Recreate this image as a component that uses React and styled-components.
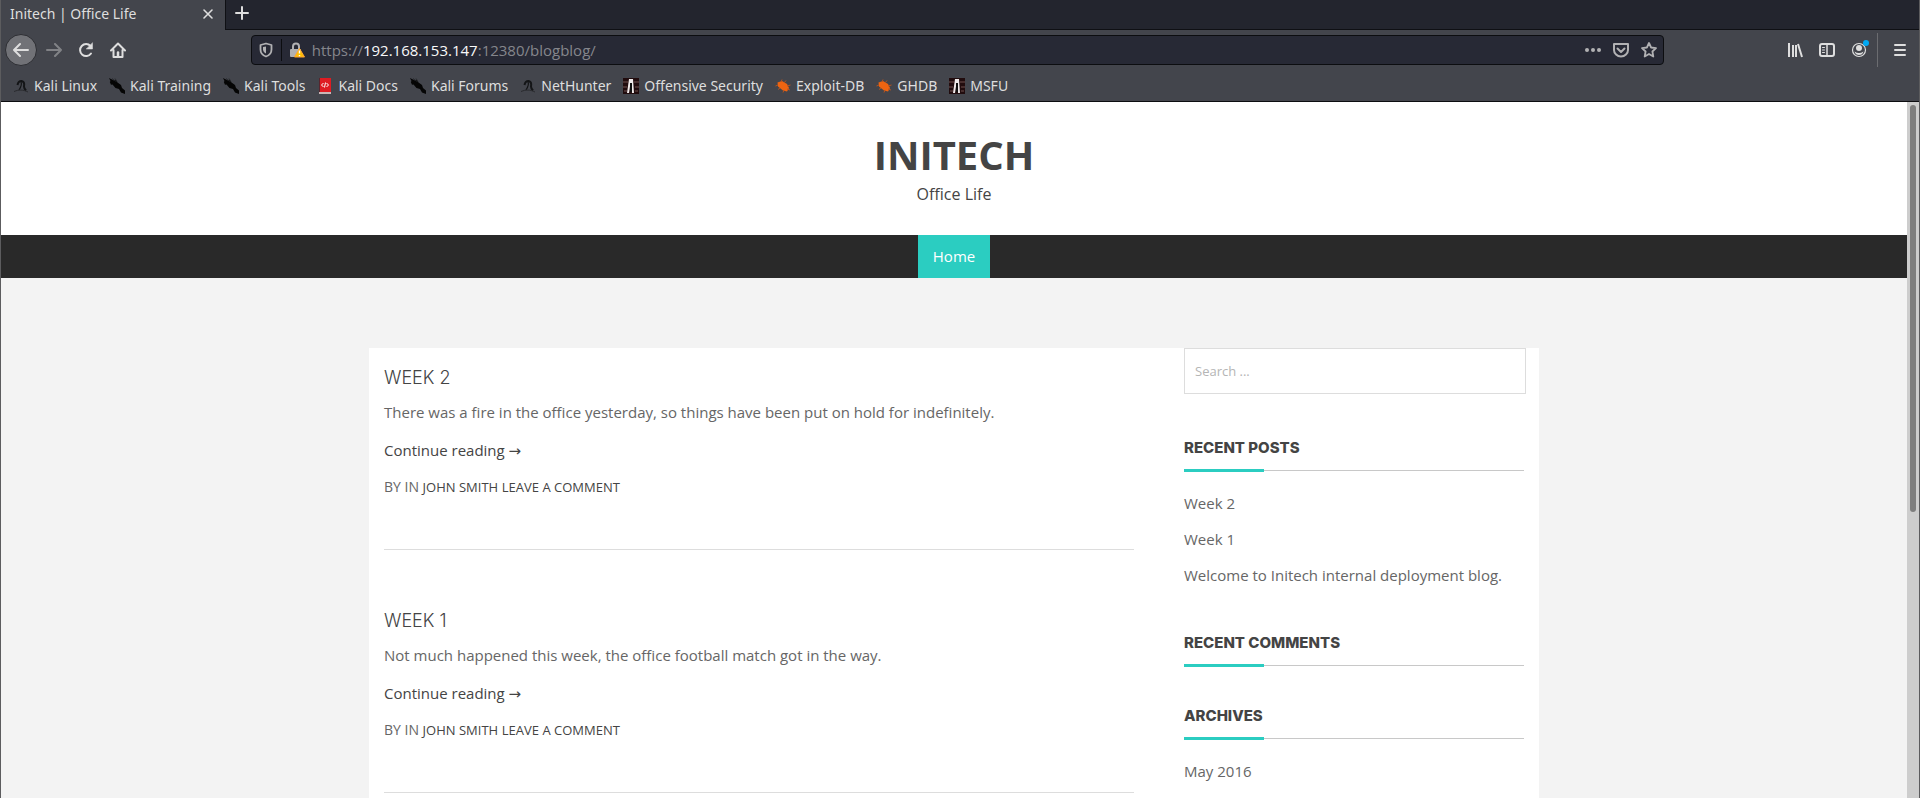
import React from "react";
import styled, { createGlobalStyle } from "styled-components";

const GlobalStyle = createGlobalStyle`
  *, *::before, *::after { box-sizing: border-box; }
  body { margin: 0; background: #f3f3f3; }
  h1, h2, h3, p, ul { margin: 0; padding: 0; }
  a { color: inherit; text-decoration: none; }
  button { padding: 0; border: 0; background: none; color: inherit; font: inherit; }
  svg { display: block; flex: none; }
`;

const Window = styled.div`
  display: flex;
  flex-direction: column;
  height: 100vh;
  overflow: hidden;
  border: solid #5c5c5e;
  border-width: 0 1px;
`;

const Chrome = styled.header`
  flex: none;
  background: #43454c;
  color: #dedede;
  font: 14px/20px "Noto Sans", sans-serif;
  border-bottom: 1px solid #0c0d10;
`;

const TabStrip = styled.div`
  display: flex;
  height: 30px;
  background: #23252e;
`;

const Tab = styled.div`
  display: flex;
  align-items: center;
  justify-content: space-between;
  width: 224px;
  padding: 0 11px 3px 9px;
  background: #43454c;
`;

const NewTab = styled.button`
  display: flex;
  flex: 1;
  align-items: center;
  padding: 0 8px 3px;
  border-left: 1px solid #0f1014;
  border-bottom: 1px solid #0f1014;
`;

const Toolbar = styled.div`
  display: flex;
  align-items: center;
  height: 40px;
  padding: 0 9px 0 4px;
`;

const NavButton = styled.button`
  display: grid;
  place-items: center;
  width: 32px;
  height: 32px;
  opacity: ${(p) => (p.disabled ? 0.4 : 1)};
`;

const BackButton = styled(NavButton)`
  margin-right: 1px;
  border: 1px solid #2d2e33;
  border-radius: 50%;
  background: #717277;
`;

const Spacer = styled.div`
  flex: 1;
  max-width: 117px;
`;

const UrlBar = styled.div`
  display: flex;
  flex: 12;
  align-items: center;
  gap: 7px;
  height: 30px;
  padding: 0 4px 0 6px;
  border: 1px solid #0c0d10;
  border-radius: 4px;
  background: #272935;
  color: #b1b1b3;
`;

const UrlDivider = styled.span`
  width: 1px;
  height: 22px;
  background: #0c0d10;
`;

const Url = styled.div`
  flex: 1;
  color: #85868c;
  font: 15px/20px "Open Sans", sans-serif;
  white-space: nowrap;
`;

const Host = styled.span`
  color: #f9f9fa;
`;

const IconButton = styled.button`
  display: grid;
  place-items: center;
  width: ${(p) => p.$width || 20}px;
  height: 28px;
`;

const Tools = styled.div`
  display: flex;
  align-items: center;
  gap: 12px;
  padding-left: 4px;
`;

const ToolDivider = styled.span`
  width: 1px;
  height: 34px;
  margin-left: -4px;
  background: #6b6c70;
`;

const Bookmarks = styled.nav`
  display: flex;
  align-items: center;
  gap: 12px;
  height: 31px;
  padding: 0 12px;
`;

const Bookmark = styled.a`
  display: flex;
  align-items: center;
  gap: 5px;
  white-space: nowrap;
`;

const Viewport = styled.div`
  display: flex;
  flex: 1;
  min-height: 0;
`;

const Page = styled.div`
  flex: 1;
  overflow: hidden;
  background: #f3f3f3;
  color: #666;
  font: 15px/22px "Open Sans", "DejaVu Sans", sans-serif;
`;

const ScrollTrack = styled.div`
  width: 12px;
  padding: 3px;
  background: #cdcdcd;
`;

const ScrollThumb = styled.div`
  height: 59%;
  border-radius: 3px;
  background: #7e7e7e;
`;

const Masthead = styled.header`
  padding: 26px 0 29px;
  background: #fff;
  color: #444;
  text-align: center;
`;

const SiteTitle = styled.h1`
  font-size: 40px;
  line-height: 54px;
`;

const Tagline = styled.p`
  font-size: 16px;
  line-height: 24px;
`;

const SiteNav = styled.nav`
  display: flex;
  justify-content: center;
  background: #292929;
`;

const NavLink = styled.a`
  padding: 0 15px;
  background: #2bcdc1;
  color: #fff;
  line-height: 43px;
`;

const Container = styled.div`
  display: grid;
  grid-template-columns: 2fr 1fr;
  max-width: 1170px;
  margin: 70px auto 0;
  background: #fff;
`;

const Posts = styled.main`
  padding: 18px 15px 0;
`;

const Post = styled.article`
  margin-bottom: 59px;
  padding-bottom: 51px;
  border-bottom: 1px solid #ddd;
`;

const PostTitle = styled.h2`
  margin-bottom: 11px;
  color: #444;
  font: 300 18px/24px Inter, sans-serif;
`;

const More = styled.p`
  margin: 16px 0 15px;
  color: #444;
`;

const Meta = styled.p`
  font-size: 14px;
  text-transform: uppercase;
`;

const MetaLink = styled.a`
  color: #444;
  font-size: 13px;
`;

const Sidebar = styled.aside`
  padding: 0 15px 0 35px;
`;

const SearchField = styled.input`
  display: block;
  width: calc(100% + 2px);
  height: 46px;
  margin-bottom: 44px;
  padding: 0 10px;
  border: 1px solid #ddd;
  border-radius: 0;
  background: #fff;
  font: 13px/18px "Open Sans", sans-serif;
  &::placeholder { color: #b5b5b5; }
`;

const WidgetBox = styled.section`
  margin-bottom: 40px;
`;

const WidgetTitle = styled.h3`
  position: relative;
  padding-bottom: 12px;
  border-bottom: 1px solid #c8c8c8;
  color: #444;
  font: 800 15px/20px Inter, sans-serif;
  &::after {
    content: "";
    position: absolute;
    left: 0;
    bottom: -2px;
    width: 80px;
    height: 3px;
    background: #2bcdc1;
  }
`;

const WidgetList = styled.ul`
  padding-top: 14px;
  line-height: 36px;
  list-style: none;
`;

const Line = ({ size = 16, width = 2, children, box = 16 }) => (
  <svg width={size} height={size} viewBox={`0 0 ${box} ${box}`} fill="none" stroke="currentColor"
    strokeWidth={width} strokeLinecap="round" strokeLinejoin="round" aria-hidden="true">
    {children}
  </svg>
);

const favicons = {
  dragon: (
    <svg width="16" height="16" viewBox="0 0 16 16" fill="none" stroke="#141517" aria-hidden="true">
      <path d="M4.500 7C5 4 7 3 8.500 3c2.500.5 3 3 2.500 5.500 0 2 1 3 2 4" strokeWidth="2" />
      <path d="M8 4c1 2 0 5-2 8" strokeWidth="1.200" />
      <path d="M1 13.500c5-2 9-2 14 .5" stroke="#292a2e" />
    </svg>
  ),
  kali: (
    <svg width="16" height="16" viewBox="0 0 16 16" aria-hidden="true">
      <path d="M0 0l5 2.500L6.500 2l2 2.500L12 7l1 3 3 2.500V16l-4-1.500-2-3.500-3.500-1L3.500 6.500 2 6.800.8 4 1.500 3z" fill="#050505" />
      <path d="M3 .5l4 3M6 .5l2 3" stroke="#222327" strokeWidth="0.800" />
    </svg>
  ),
  docs: (
    <svg width="16" height="16" viewBox="0 0 16 16" fill="none" aria-hidden="true">
      <path d="M2 0h12v14H2z" fill="#df1c22" />
      <path d="M2 0h1v14H2z" fill="#57252e" />
      <path d="M2 14h12v2H2z" fill="#c8b6b5" />
      <path d="M6.500 5L4.500 7l2 2M9.500 5l2 2-2 2M8.500 4.500l-1 5" stroke="#fff" />
    </svg>
  ),
  offsec: (
    <svg width="16" height="16" viewBox="0 0 16 16" aria-hidden="true">
      <path d="M0 0h16v16H0z" fill="#210c0e" />
      <path d="M0 4h5M11 4h5M0 9h4M12 9h4M1 13h3M12 13h3" stroke="#70504f" />
      <path d="M6 1h4l1 14H9L8.500 5h-1L6 15H4z" fill="#f0eaea" />
      <path d="M7 5h2v9H7z" fill="#101010" />
    </svg>
  ),
  exploit: (
    <svg width="16" height="16" viewBox="0 0 16 16" aria-hidden="true">
      <path d="M2.500 4.500L7 3l5 3 2 4-2 3.500-4-1-5-4z" fill="#ee6411" />
      <path d="M6 4l1-2.500M9 5l2-2.500M12 8l3.500-1M12 11l3 1M3 7L.5 8M5 10l-2 1.500M9 12l-1 2.500" stroke="#b6541f" />
    </svg>
  ),
};

const bookmarks = [
  ["Kali Linux", "dragon"],
  ["Kali Training", "kali"],
  ["Kali Tools", "kali"],
  ["Kali Docs", "docs"],
  ["Kali Forums", "kali"],
  ["NetHunter", "dragon"],
  ["Offensive Security", "offsec"],
  ["Exploit-DB", "exploit"],
  ["GHDB", "exploit"],
  ["MSFU", "offsec"],
];

const posts = [
  ["Week 2", "There was a fire in the office yesterday, so things have been put on hold for indefinitely."],
  ["Week 1", "Not much happened this week, the office football match got in the way."],
];

const widgets = [
  ["Recent Posts", ["Week 2", "Week 1", "Welcome to Initech internal deployment blog."]],
  ["Recent Comments", []],
  ["Archives", ["May 2016"]],
];

function BrowserChrome() {
  return (
    <Chrome>
      <TabStrip>
        <Tab>
          Initech | Office Life
          <IconButton aria-label="Close tab" $width={12}>
            <Line size={12} box={12} width={1.6}><path d="M2 2l8 8M10 2l-8 8" /></Line>
          </IconButton>
        </Tab>
        <NewTab aria-label="New tab"><Line><path d="M8 2v12M2 8h12" /></Line></NewTab>
      </TabStrip>
      <Toolbar>
        <BackButton aria-label="Back"><Line><path d="M15 8H1M7 2L1 8l6 6" /></Line></BackButton>
        <NavButton aria-label="Forward" disabled><Line><path d="M1 8h14M9 2l6 6-6 6" /></Line></NavButton>
        <NavButton aria-label="Reload">
          <Line><path d="M13 11.500A6 6 0 1 1 12.500 4" /><path d="M14.500 1v6h-6z" fill="currentColor" strokeWidth="0.500" /></Line>
        </NavButton>
        <NavButton aria-label="Home">
          <Line><path d="M1 8.500L8 1.500l7 7M3.500 8v7h9V8" /><path d="M8 10.500v4" strokeWidth="2.500" /></Line>
        </NavButton>
        <Spacer />
        <UrlBar>
          <Line>
            <path d="M8 1.500L13.500 3v4.500c0 3.500-2.500 6-5.500 7-3-1-5.500-3.500-5.500-7V3z" strokeWidth="1.800" />
            <path d="M8 4.500v7C6 10.500 5 9 5 7.500V5z" fill="currentColor" stroke="none" />
          </Line>
          <UrlDivider />
          <svg width="16" height="16" viewBox="0 0 16 16" aria-hidden="true">
            <path d="M4 7V4.500a3 3 0 0 1 6 0V7" fill="none" stroke="#b1b1b3" strokeWidth="2" />
            <rect x="1" y="7" width="11" height="8" rx="1" fill="#b1b1b3" />
            <path d="M10.500 6.500l5 8.500h-10z" fill="#ffbf00" stroke="#ffa436" strokeLinejoin="round" />
            <path d="M10.500 8.500v3M10.500 13v1.200" stroke="#fff" strokeWidth="1.400" />
          </svg>
          <Url>https://<Host>192.168.153.147</Host>:12380/blogblog/</Url>
          <IconButton aria-label="Page actions" $width={21}>
            <svg width="18" height="16" viewBox="0 0 18 16" fill="currentColor" aria-hidden="true">
              <circle cx="3" cy="8" r="2" /><circle cx="9" cy="8" r="2" /><circle cx="15" cy="8" r="2" />
            </svg>
          </IconButton>
          <IconButton aria-label="Save to Pocket" $width={21}>
            <Line><path d="M1 2h14v6a7 6.500 0 0 1-14 0zM4.500 6.500L8 10l3.500-3.500" /></Line>
          </IconButton>
          <IconButton aria-label="Bookmark this page" $width={21}>
            <Line width={1.8}><path d="M8 1l2.100 4.500 4.900.6-3.600 3.400.9 5L8 12l-4.300 2.500.9-5L1 6.100l4.900-.6z" /></Line>
          </IconButton>
        </UrlBar>
        <Spacer />
        <Tools>
          <IconButton aria-label="Library">
            <svg width="16" height="16" viewBox="0 0 16 16" fill="none" stroke="currentColor" strokeWidth="2" aria-hidden="true">
              <path d="M2 1v14M6 3v12M9 3v12M11 2l4 13" />
            </svg>
          </IconButton>
          <IconButton aria-label="Sidebars">
            <Line><rect x="1" y="2" width="14" height="12" rx="2" /><path d="M8 2v12" strokeWidth="1.500" /><path d="M3.500 5.500h2M3.500 8h2M3.500 10.500h2" strokeWidth="1" /></Line>
          </IconButton>
          <IconButton aria-label="Account">
            <svg width="20" height="20" viewBox="0 0 20 20" aria-hidden="true">
              <circle cx="10" cy="10" r="6.500" fill="none" stroke="currentColor" strokeWidth="1.200" />
              <circle cx="10" cy="8" r="3" fill="currentColor" />
              <path d="M5.500 11.500q4.500 3 9 0-1 3.500-4.500 3.500t-4.500-3.500z" fill="currentColor" />
              <circle cx="17" cy="3" r="3" fill="#00a9f4" />
            </svg>
          </IconButton>
          <ToolDivider />
          <IconButton aria-label="Menu"><Line><path d="M3 3h10M3 8h10M3 13h10" /></Line></IconButton>
        </Tools>
      </Toolbar>
      <Bookmarks aria-label="Bookmarks">
        {bookmarks.map(([name, icon]) => (
          <Bookmark href="#" key={name}>{favicons[icon]}{name}</Bookmark>
        ))}
      </Bookmarks>
    </Chrome>
  );
}

function Widget({ title, items }) {
  return (
    <WidgetBox>
      <WidgetTitle>{title.toUpperCase()}</WidgetTitle>
      {items.length > 0 && (
        <WidgetList>
          {items.map((item) => <li key={item}><a href="#">{item}</a></li>)}
        </WidgetList>
      )}
    </WidgetBox>
  );
}

export default function App() {
  return (
    <Window>
      <GlobalStyle />
      <BrowserChrome />
      <Viewport>
        <Page>
          <Masthead>
            <SiteTitle>INITECH</SiteTitle>
            <Tagline>Office Life</Tagline>
          </Masthead>
          <SiteNav><NavLink href="#">Home</NavLink></SiteNav>
          <Container>
            <Posts>
              {posts.map(([title, text]) => (
                <Post key={title}>
                  <PostTitle>{title.toUpperCase()}</PostTitle>
                  <p>{text}</p>
                  <More><a href="#">Continue reading →</a></More>
                  <Meta>
                    By in <MetaLink href="#">John Smith</MetaLink> <MetaLink href="#">Leave a comment</MetaLink>
                  </Meta>
                </Post>
              ))}
            </Posts>
            <Sidebar>
              <SearchField type="search" placeholder="Search ..." aria-label="Search" />
              {widgets.map(([title, items]) => <Widget key={title} title={title} items={items} />)}
            </Sidebar>
          </Container>
        </Page>
        <ScrollTrack><ScrollThumb /></ScrollTrack>
      </Viewport>
    </Window>
  );
}
